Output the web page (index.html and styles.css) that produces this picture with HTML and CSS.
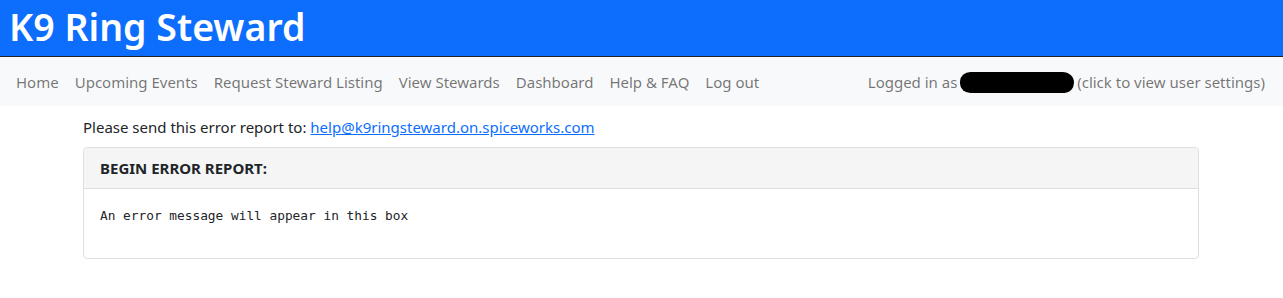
FILE: index.html
```html
<!DOCTYPE html>
<html lang="en">
<head>
  <meta charset="UTF-8" />
  <meta name="viewport" content="width=device-width, initial-scale=1.0"/>
  <title>K9 Ring Steward - Error</title>
<link rel="stylesheet" href="styles.css">
</head>
<body>

<header class="site-header">
  <h1>K9 Ring Steward</h1>
</header>

<nav class="navbar">
  <ul class="nav-links">
    <li><a href="#">Home</a></li>
    <li><a href="#">Upcoming Events</a></li>
    <li><a href="#">Request Steward Listing</a></li>
    <li><a href="#">View Stewards</a></li>
    <li><a href="#">Dashboard</a></li>
    <li><a href="#">Help &amp; FAQ</a></li>
    <li><a href="#">Log out</a></li>
  </ul>
  <a class="user-link" href="#">Logged in as <span class="redacted"></span> (click to view user settings)</a>
</nav>

<main class="container">
  <p class="report-note">Please send this error report to: <a href="#">help@k9ringsteward.on.spiceworks.com</a></p>
  <div class="card">
    <div class="card-header">BEGIN ERROR REPORT:</div>
    <div class="card-body">
      <pre>An error message will appear in this box</pre>
    </div>
  </div>
</main>

</body>
</html>
```

FILE: styles.css
```css
:root {
  --blue: #0d6efd;
  --nav-bg: #f8f9fa;
  --nav-text: rgba(0, 0, 0, 0.55);
  --border: #dfdfdf;
}

body {
  margin: 0;
  font-family: 'Noto Sans', 'Open Sans', sans-serif;
  font-size: 16px;
  line-height: 1.5;
  color: #212529;
  background: #fff;
}

.site-header {
  background: var(--blue);
  border-bottom: 1px solid #212529;
  height: 57px;
  box-sizing: border-box;
  padding: 0 9px;
}

.site-header h1 {
  margin: 0;
  color: #fff;
  font-size: 37.5px;
  font-weight: 600;
  line-height: 54px;
}

.navbar {
  background: var(--nav-bg);
  height: 49px;
  display: flex;
  align-items: center;
  justify-content: space-between;
  padding: 1px 18px 0 8px;
  box-sizing: border-box;
}

.nav-links {
  list-style: none;
  margin: 0;
  padding: 0;
  display: flex;
}

.nav-links a,
.user-link {
  display: block;
  padding: 8px;
  color: var(--nav-text);
  text-decoration: none;
  font-size: 15px;
}

.user-link {
  padding: 8px 0;
}

.redacted {
  display: inline-block;
  width: 114px;
  height: 21px;
  background: #000;
  border-radius: 11px 12px 10px 11px / 10px 11px 11px 10px;
  vertical-align: -5px;
  margin: 0 -1px;
}

.container {
  max-width: 1116px;
  margin: 0 auto;
  padding: 10px 1px 0 0;
}

.report-note {
  margin: 0 0 8px;
  font-size: 15px;
}

.report-note a {
  color: var(--blue);
}

.card {
  border: 1px solid var(--border);
  border-radius: 4px;
  overflow: hidden;
}

.card-header {
  background: #f5f5f5;
  border-bottom: 1px solid var(--border);
  padding: 8px 16px;
  font-weight: 700;
  font-size: 15px;
  line-height: 24px;
}

.card-body {
  padding: 16px;
}

.card-body pre {
  margin: 0 0 16px;
  font-family: 'DejaVu Sans Mono', 'Liberation Mono', monospace;
  font-size: 12.8px;
  line-height: 21px;
}
```
